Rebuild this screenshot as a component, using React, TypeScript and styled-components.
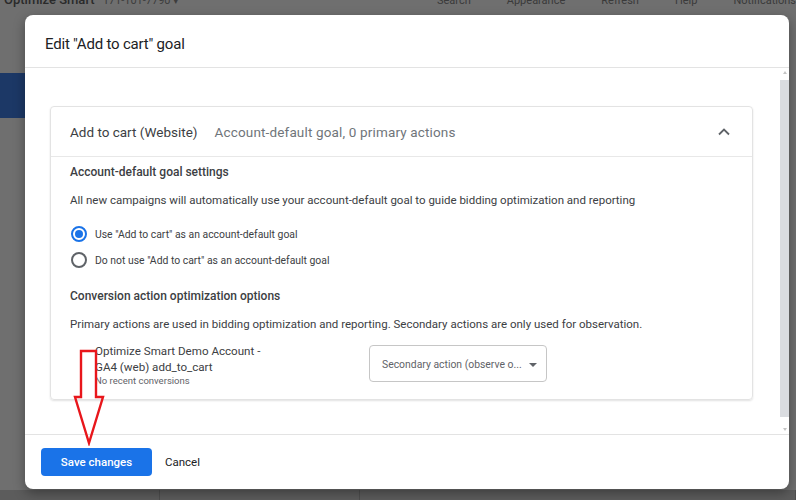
import React from 'react';
import styled, { createGlobalStyle } from 'styled-components';

const GlobalStyle = createGlobalStyle`
  html, body {
    margin: 0;
    padding: 0;
    background: #6f6f6f;
  }
  * {
    box-sizing: border-box;
  }
`;

const Page = styled.div`
  position: relative;
  width: 796px;
  height: 500px;
  overflow: hidden;
  background: #6f6f6f;
  font-family: Roboto, 'Liberation Sans', sans-serif;
  display: grid;
  grid-template-rows: 10px 63px 45px 1fr 10px;
  grid-template-columns: 25px 1fr;
`;

const TopBar = styled.header`
  grid-column: 1 / 3;
  display: flex;
  align-items: flex-end;
  justify-content: space-between;
  padding: 0 0 3px 4px;
  color: #2a2a2a;
  font-size: 13px;
  line-height: 13px;
  overflow: hidden;
`;

const Brand = styled.span`
  font-weight: 500;
  span {
    font-weight: 400;
    font-size: 11px;
    color: #3d3d3d;
    margin-left: 8px;
  }
`;

const TopLinks = styled.nav`
  display: flex;
  gap: 36px;
  font-size: 11px;
  color: #3a3a3a;
  white-space: nowrap;
`;

const SideGap = styled.div`
  grid-column: 1 / 3;
`;

const SideActive = styled.div`
  background: #1c3866;
`;

const BottomStrip = styled.div`
  grid-column: 1 / 3;
  grid-row: 5;
  background: #5c5c5c;
  display: grid;
  grid-template-columns: 160px 200px 1fr;
  div {
    border-right: 1px solid #4e4e4e;
  }
`;

const Dialog = styled.div`
  position: absolute;
  left: 25px;
  top: 15px;
  width: 764px;
  height: 474px;
  background: #fff;
  border-radius: 8px;
  box-shadow: 0 4px 12px rgba(0, 0, 0, 0.35);
  display: flex;
  flex-direction: column;
  overflow: hidden;
`;

const DialogHeader = styled.div`
  height: 53px;
  flex: none;
  display: flex;
  align-items: center;
  padding: 6px 20px 0;
  border-bottom: 1px solid #e3e3e3;
`;

const Title = styled.h1`
  margin: 0;
  font-size: 15px;
  font-weight: 400;
  letter-spacing: -0.2px;
  color: #202124;
`;

const DialogBody = styled.div`
  flex: 1;
  min-height: 0;
  display: flex;
`;

const ScrollArea = styled.div`
  flex: 1;
  overflow: hidden;
  padding: 38px 26px 0 25px;
`;

const ScrollBar = styled.div`
  width: 10px;
  flex: none;
  display: flex;
  flex-direction: column;
  align-items: center;
  padding: 3px 0 3px 1px;
`;

const ScrollArrow = styled.span<{ $down?: boolean }>`
  width: 0;
  height: 0;
  flex: none;
  border-left: 2.5px solid transparent;
  border-right: 2.5px solid transparent;
  ${(p) =>
    p.$down ? 'border-top: 3px solid #c4c4c4;' : 'border-bottom: 3px solid #c4c4c4;'}
`;

const ScrollThumb = styled.div`
  align-self: stretch;
  flex: 1;
  background: #dadce0;
  margin: 6px 0 11px;
`;

const Card = styled.section`
  border: 1px solid #e3e3e3;
  border-radius: 4px;
  box-shadow: 0 1px 2px rgba(0, 0, 0, 0.12);
  height: 294px;
`;

const CardHeader = styled.div`
  height: 50px;
  display: flex;
  align-items: center;
  padding: 0 21px 0 19px;
  border-bottom: 1px solid #e8e8e8;
  font-size: 13.5px;
`;

const CardTitle = styled.span`
  color: #3c4043;
`;

const CardSubtitle = styled.span`
  color: #70757a;
  margin-left: 17px;
  letter-spacing: 0.15px;
  flex: 1;
`;

const CardContent = styled.div`
  padding: 7px 19px 0;
  color: #3c4043;
`;

const SectionTitle = styled.h2`
  margin: 0;
  font-size: 12px;
  font-weight: 500;
  line-height: 16px;
  color: #3c4043;
`;

const Description = styled.p`
  margin: 12px 0 0;
  font-size: 11.5px;
  line-height: 16px;
  color: #3c4043;
`;

const RadioList = styled.div`
  margin-top: 18px;
  display: flex;
  flex-direction: column;
  gap: 10px;
  padding-left: 1px;
`;

const RadioRow = styled.label`
  display: flex;
  align-items: center;
  gap: 8px;
  font-size: 10.4px;
  height: 16px;
  color: #3c4043;
`;

const RadioCircle = styled.span<{ $checked?: boolean }>`
  width: 16px;
  height: 16px;
  border-radius: 50%;
  border: 2px solid ${(p) => (p.$checked ? '#1a73e8' : '#5f6368')};
  display: flex;
  align-items: center;
  justify-content: center;
  &::after {
    content: '';
    width: 8px;
    height: 8px;
    border-radius: 50%;
    background: ${(p) => (p.$checked ? '#1a73e8' : 'transparent')};
  }
`;

const SecondSection = styled.div`
  margin-top: 20px;
`;

const ActionRow = styled.div`
  margin-top: 10px;
  display: flex;
  align-items: flex-start;
  padding-left: 25px;
`;

const ActionInfo = styled.div`
  width: 274px;
  padding-top: 1px;
`;

const ActionName = styled.div`
  font-size: 11.6px;
  line-height: 16px;
  color: #3c4043;
`;

const ActionMeta = styled.div`
  font-size: 9.5px;
  line-height: 13px;
  color: #5f6368;
  margin-top: -1px;
`;

const Select = styled.div`
  width: 178px;
  height: 37px;
  margin-top: 3px;
  border: 1px solid #c6c6c6;
  border-radius: 4px;
  display: flex;
  align-items: center;
  gap: 7px;
  padding: 2px 11px 0 12px;
  font-size: 10.4px;
  white-space: nowrap;
  color: #5f6368;
`;

const Caret = styled.span`
  width: 0;
  height: 0;
  flex: none;
  border-left: 4.5px solid transparent;
  border-right: 4.5px solid transparent;
  border-top: 4.5px solid #5f6368;
`;

const DialogFooter = styled.div`
  height: 55px;
  flex: none;
  border-top: 1px solid #e3e3e3;
  display: flex;
  align-items: center;
  padding: 1px 16px 2px;
  gap: 13px;
`;

const PrimaryButton = styled.button`
  width: 111px;
  height: 28px;
  border: 0;
  border-radius: 4px;
  background: #1a73e8;
  color: #fff;
  font-family: Roboto, 'Liberation Sans', sans-serif;
  font-size: 11.5px;
  font-weight: 500;
`;

const TextButton = styled.button`
  border: 0;
  background: none;
  padding: 0;
  color: #202124;
  font-family: Roboto, 'Liberation Sans', sans-serif;
  font-size: 11.5px;
`;

const Arrow = styled.svg`
  position: absolute;
  left: 72px;
  top: 348px;
  pointer-events: none;
`;

function ChevronUp() {
  return (
    <svg width="14" height="14" viewBox="0 0 14 14">
      <path d="M2 9.5 L7 4.5 L12 9.5" fill="none" stroke="#5f6368" strokeWidth="1.8" />
    </svg>
  );
}

function App() {
  return (
    <Page>
      <GlobalStyle />
      <TopBar>
        <Brand>
          Optimize Smart<span>171-101-7790 ▾</span>
        </Brand>
        <TopLinks>
          <span>Search</span>
          <span>Appearance</span>
          <span>Refresh</span>
          <span>Help</span>
          <span>Notifications</span>
        </TopLinks>
      </TopBar>
      <SideGap />
      <SideActive />
      <div />
      <BottomStrip>
        <div />
        <div />
        <div />
      </BottomStrip>

      <Dialog>
        <DialogHeader>
          <Title>Edit "Add to cart" goal</Title>
        </DialogHeader>
        <DialogBody>
          <ScrollArea>
            <Card>
              <CardHeader>
                <CardTitle>Add to cart (Website)</CardTitle>
                <CardSubtitle>Account-default goal, 0 primary actions</CardSubtitle>
                <ChevronUp />
              </CardHeader>
              <CardContent>
                <SectionTitle>Account-default goal settings</SectionTitle>
                <Description>
                  All new campaigns will automatically use your account-default goal to guide
                  bidding optimization and reporting
                </Description>
                <RadioList>
                  <RadioRow>
                    <RadioCircle $checked />
                    Use "Add to cart" as an account-default goal
                  </RadioRow>
                  <RadioRow>
                    <RadioCircle />
                    Do not use "Add to cart" as an account-default goal
                  </RadioRow>
                </RadioList>
                <SecondSection>
                  <SectionTitle>Conversion action optimization options</SectionTitle>
                  <Description>
                    Primary actions are used in bidding optimization and reporting. Secondary
                    actions are only used for observation.
                  </Description>
                </SecondSection>
                <ActionRow>
                  <ActionInfo>
                    <ActionName>Optimize Smart Demo Account -</ActionName>
                    <ActionName>GA4 (web) add_to_cart</ActionName>
                    <ActionMeta>No recent conversions</ActionMeta>
                  </ActionInfo>
                  <Select>
                    <span>Secondary action (observe o...</span>
                    <Caret />
                  </Select>
                </ActionRow>
              </CardContent>
            </Card>
          </ScrollArea>
          <ScrollBar>
            <ScrollArrow />
            <ScrollThumb />
            <ScrollArrow $down />
          </ScrollBar>
        </DialogBody>
        <DialogFooter>
          <PrimaryButton>Save changes</PrimaryButton>
          <TextButton>Cancel</TextButton>
        </DialogFooter>
      </Dialog>

      <Arrow width="34" height="98" viewBox="0 0 34 98">
        <path
          d="M9 3 H24 V49 H31 L17 95 L3 49 H9 Z"
          fill="none"
          stroke="#e8161b"
          strokeWidth="2.4"
          strokeLinejoin="miter"
        />
      </Arrow>
    </Page>
  );
}

export default App;
